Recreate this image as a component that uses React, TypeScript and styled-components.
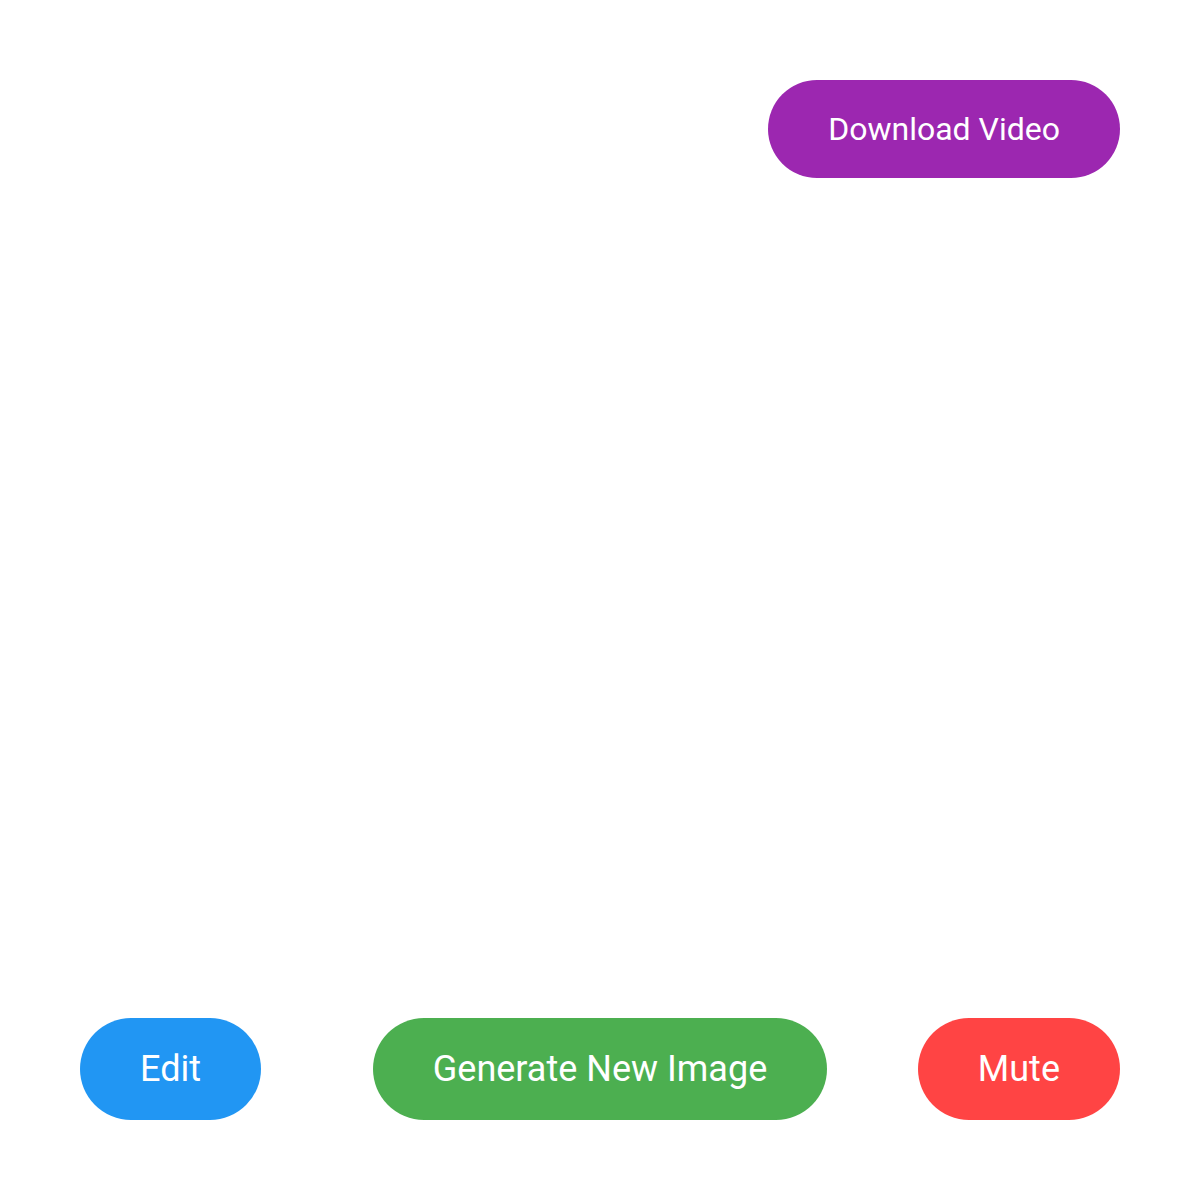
import styled, { createGlobalStyle } from "styled-components";

const GlobalStyle = createGlobalStyle`
  html, body {
    margin: 0;
    padding: 0;
    background: #ffffff;
  }
  body {
    font-family: Roboto, "Noto Sans", sans-serif;
  }
`;

const Screen = styled.div`
  width: 1200px;
  height: 1200px;
  box-sizing: border-box;
  padding: 80px;
  display: flex;
  flex-direction: column;
  justify-content: space-between;
`;

const TopBar = styled.div`
  display: flex;
  justify-content: flex-end;
`;

const BottomBar = styled.div`
  display: grid;
  grid-template-columns: 1fr auto 1fr;
  align-items: center;
  & > :first-child {
    justify-self: start;
  }
  & > :last-child {
    justify-self: end;
  }
`;

const PillButton = styled.button<{ $bg: string; $size: number; $height: number }>`
  height: ${(p) => p.$height}px;
  padding: 0 60px;
  border: none;
  border-radius: ${(p) => p.$height / 2}px;
  background-color: ${(p) => p.$bg};
  color: #ffffff;
  font-family: Roboto, "Noto Sans", sans-serif;
  font-size: ${(p) => p.$size}px;
  font-weight: 400;
  white-space: nowrap;
  cursor: pointer;
`;

function App() {
  return (
    <>
      <GlobalStyle />
      <Screen>
        <TopBar>
          <PillButton $bg="#9c27b0" $size={32} $height={98}>
            Download Video
          </PillButton>
        </TopBar>
        <BottomBar>
          <PillButton $bg="#2196f3" $size={36} $height={102}>
            Edit
          </PillButton>
          <PillButton $bg="#4caf50" $size={36} $height={102}>
            Generate New Image
          </PillButton>
          <PillButton $bg="#ff4444" $size={36} $height={102}>
            Mute
          </PillButton>
        </BottomBar>
      </Screen>
    </>
  );
}

export default App;
